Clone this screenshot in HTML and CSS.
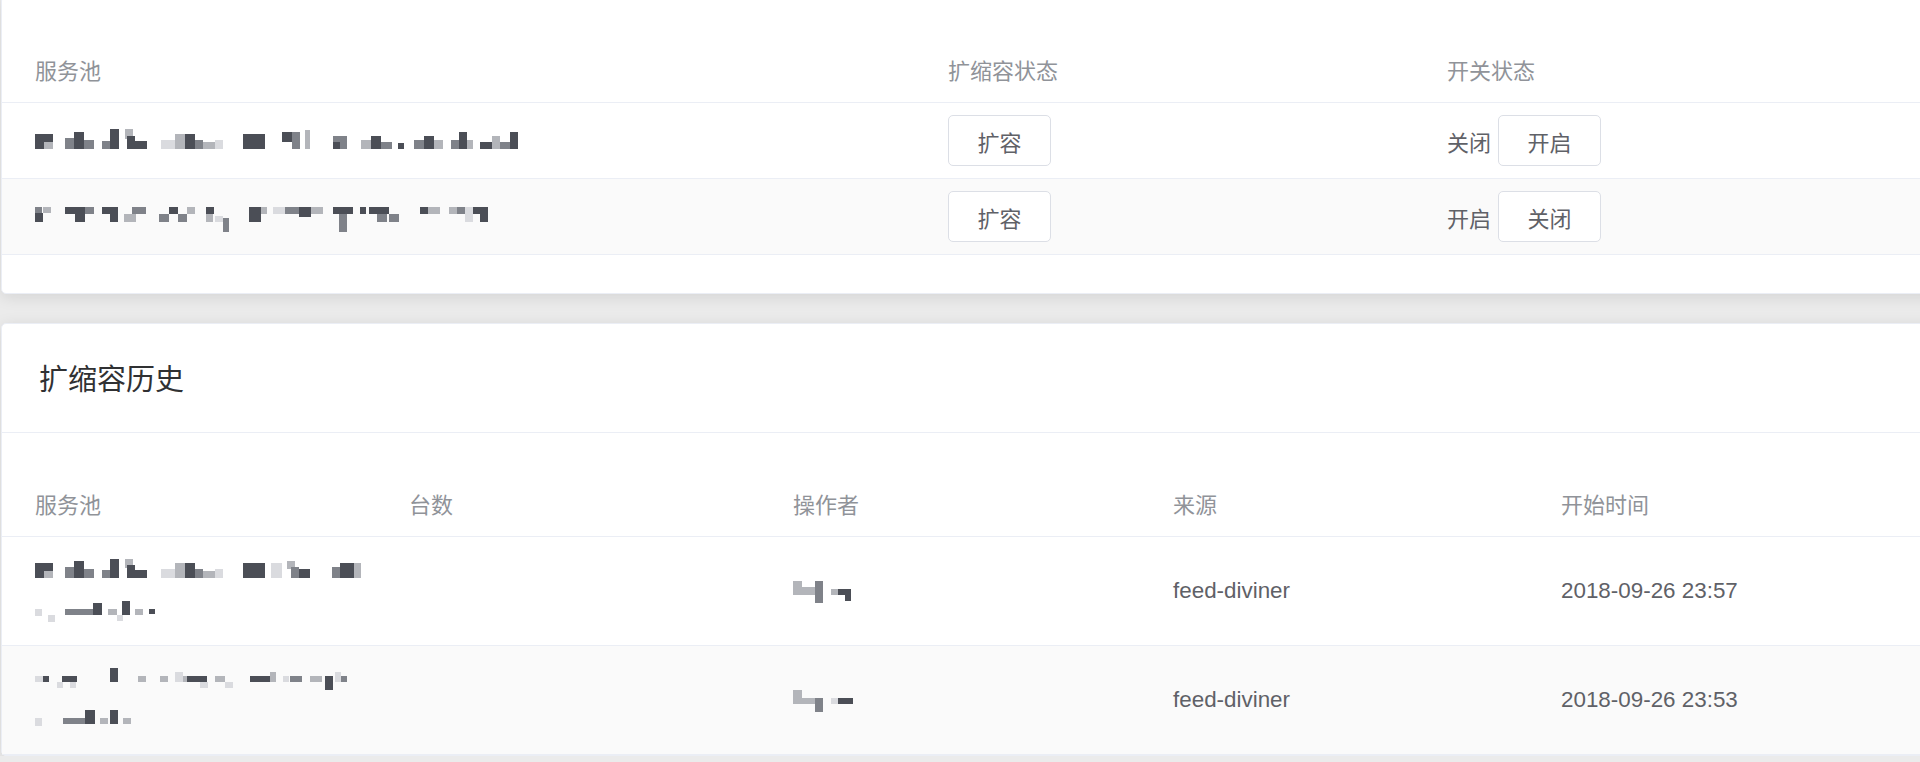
FILE: index.html
```html
<!DOCTYPE html>
<html lang="zh-CN">
<head>
<meta charset="utf-8">
<title>扩缩容</title>
<link rel="stylesheet" href="styles.css">
</head>
<body>
<div class="page">
  <section class="card card-top">
    <div class="table t3">
      <div class="row head">
        <div class="cell first">服务池</div>
        <div class="cell">扩缩容状态</div>
        <div class="cell">开关状态</div>
      </div>
      <div class="row">
        <div class="cell first">
          <svg class="mosaic" width="490" height="30" viewBox="0 0 490 30" aria-hidden="true">
            <rect class="d" x="0" y="8" width="18" height="15"/><rect class="l" x="9" y="16" width="9" height="7"/>
            <rect class="m" x="30" y="12" width="9" height="11"/><rect class="d" x="39" y="6" width="10" height="17"/><rect class="m" x="49" y="14" width="10" height="9"/>
            <rect class="m" x="67" y="15" width="8" height="8"/><rect class="d" x="75" y="3" width="9" height="20"/>
            <rect class="l" x="90" y="3" width="8" height="10"/><rect class="d" x="92" y="10" width="8" height="13"/><rect class="d" x="100" y="15" width="12" height="8"/>
            <rect class="x" x="126" y="14" width="14" height="9"/><rect class="l" x="140" y="8" width="10" height="15"/><rect class="d" x="150" y="8" width="10" height="15"/><rect class="m" x="160" y="14" width="8" height="9"/><rect class="l" x="168" y="16" width="12" height="7"/><rect class="x" x="180" y="14" width="8" height="9"/>
            <rect class="d" x="208" y="8" width="22" height="15"/>
            <rect class="d" x="247" y="6" width="10" height="10"/><rect class="m" x="257" y="6" width="8" height="17"/><rect class="l" x="270" y="4" width="5" height="19"/>
            <rect class="m" x="298" y="10" width="14" height="13"/><rect class="d" x="298" y="16" width="7" height="7"/>
            <rect class="l" x="326" y="14" width="10" height="9"/><rect class="d" x="336" y="10" width="10" height="13"/><rect class="m" x="346" y="16" width="11" height="7"/>
            <rect class="d" x="363" y="17" width="6" height="6"/>
            <rect class="m" x="379" y="14" width="10" height="9"/><rect class="d" x="389" y="10" width="10" height="13"/><rect class="l" x="399" y="14" width="9" height="9"/>
            <rect class="m" x="416" y="14" width="8" height="9"/><rect class="d" x="424" y="6" width="8" height="17"/><rect class="l" x="432" y="14" width="6" height="9"/>
            <rect class="d" x="445" y="16" width="12" height="7"/><rect class="l" x="457" y="10" width="8" height="13"/><rect class="m" x="465" y="16" width="10" height="7"/><rect class="d" x="475" y="6" width="8" height="17"/>
          </svg>
        </div>
        <div class="cell"><button class="btn" type="button">扩容</button></div>
        <div class="cell"><span class="state">关闭</span><button class="btn" type="button">开启</button></div>
      </div>
      <div class="row striped">
        <div class="cell first">
          <svg class="mosaic" width="460" height="30" viewBox="0 0 460 30" aria-hidden="true">
            <rect class="m" x="0" y="5" width="7" height="6"/><rect class="d" x="0" y="11" width="8" height="9"/><rect class="l" x="8" y="5" width="8" height="6"/>
            <rect class="d" x="30" y="5" width="10" height="7"/><rect class="d" x="40" y="5" width="10" height="15"/><rect class="m" x="50" y="5" width="9" height="7"/>
            <rect class="d" x="67" y="5" width="16" height="7"/><rect class="d" x="75" y="12" width="8" height="8"/>
            <rect class="l" x="89" y="12" width="12" height="8"/><rect class="m" x="97" y="5" width="14" height="7"/>
            <rect class="m" x="124" y="12" width="10" height="8"/><rect class="d" x="134" y="5" width="9" height="7"/><rect class="m" x="143" y="12" width="9" height="8"/><rect class="l" x="152" y="5" width="8" height="7"/>
            <rect class="d" x="171" y="5" width="8" height="7"/><rect class="l" x="171" y="12" width="7" height="8"/><rect class="x" x="180" y="14" width="8" height="6"/><rect class="m" x="188" y="16" width="6" height="14"/>
            <rect class="d" x="214" y="5" width="12" height="15"/><rect class="l" x="226" y="5" width="6" height="7"/>
            <rect class="x" x="238" y="5" width="12" height="7"/><rect class="m" x="250" y="5" width="14" height="7"/><rect class="d" x="264" y="5" width="12" height="10"/><rect class="l" x="276" y="5" width="12" height="7"/>
            <rect class="d" x="298" y="5" width="20" height="7"/><rect class="m" x="304" y="12" width="8" height="18"/>
            <rect class="d" x="325" y="5" width="6" height="7"/><rect class="d" x="334" y="5" width="20" height="7"/><rect class="m" x="342" y="12" width="10" height="8"/><rect class="m" x="354" y="12" width="10" height="8"/>
            <rect class="d" x="385" y="5" width="8" height="7"/><rect class="l" x="393" y="5" width="12" height="7"/>
            <rect class="l" x="414" y="5" width="8" height="7"/><rect class="m" x="422" y="5" width="8" height="7"/><rect class="x" x="430" y="5" width="8" height="15"/>
            <rect class="d" x="438" y="5" width="15" height="7"/><rect class="d" x="445" y="12" width="8" height="8"/>
          </svg>
        </div>
        <div class="cell"><button class="btn" type="button">扩容</button></div>
        <div class="cell"><span class="state">开启</span><button class="btn" type="button">关闭</button></div>
      </div>
    </div>
  </section>

  <section class="card card-history">
    <div class="card-header">扩缩容历史</div>
    <div class="card-body">
      <div class="table t5">
        <div class="row head">
          <div class="cell first">服务池</div>
          <div class="cell">台数</div>
          <div class="cell">操作者</div>
          <div class="cell">来源</div>
          <div class="cell">开始时间</div>
        </div>
        <div class="row tall">
          <div class="cell first multi">
            <div class="line">
              <svg class="mosaic" width="330" height="22" viewBox="0 0 330 22" aria-hidden="true">
                <rect class="d" x="0" y="4" width="18" height="15"/><rect class="l" x="9" y="12" width="9" height="7"/>
                <rect class="m" x="30" y="8" width="9" height="11"/><rect class="d" x="39" y="2" width="10" height="17"/><rect class="m" x="49" y="10" width="10" height="9"/>
                <rect class="m" x="67" y="11" width="8" height="8"/><rect class="d" x="75" y="0" width="9" height="19"/>
                <rect class="l" x="90" y="0" width="8" height="9"/><rect class="d" x="92" y="6" width="8" height="13"/><rect class="d" x="100" y="11" width="12" height="8"/>
                <rect class="x" x="126" y="10" width="14" height="9"/><rect class="l" x="140" y="4" width="10" height="15"/><rect class="d" x="150" y="4" width="10" height="15"/><rect class="m" x="160" y="10" width="8" height="9"/><rect class="l" x="168" y="12" width="12" height="7"/><rect class="x" x="180" y="10" width="8" height="9"/>
                <rect class="d" x="208" y="4" width="22" height="15"/>
                <rect class="x" x="236" y="4" width="11" height="15"/>
                <rect class="l" x="252" y="2" width="8" height="8"/><rect class="m" x="256" y="8" width="8" height="11"/><rect class="d" x="264" y="10" width="11" height="9"/>
                <rect class="m" x="297" y="8" width="8" height="11"/><rect class="d" x="305" y="4" width="14" height="15"/><rect class="l" x="319" y="4" width="7" height="15"/>
              </svg>
            </div>
            <div class="line">
              <svg class="mosaic" width="130" height="22" viewBox="0 0 130 22" aria-hidden="true">
                <rect class="x" x="0" y="8" width="7" height="7"/><rect class="x" x="13" y="14" width="7" height="7"/>
                <rect class="m" x="30" y="8" width="8" height="6"/><rect class="m" x="38" y="8" width="20" height="6"/><rect class="d" x="58" y="2" width="9" height="12"/>
                <rect class="l" x="73" y="8" width="9" height="6"/><rect class="x" x="82" y="14" width="6" height="6"/><rect class="d" x="87" y="0" width="8" height="14"/>
                <rect class="l" x="100" y="8" width="8" height="6"/><rect class="d" x="114" y="8" width="6" height="5"/>
              </svg>
            </div>
          </div>
          <div class="cell"></div>
          <div class="cell">
            <svg class="mosaic" width="60" height="24" viewBox="0 0 60 24" aria-hidden="true">
              <rect class="l" x="0" y="2" width="9" height="14"/><rect class="l" x="9" y="8" width="13" height="8"/><rect class="m" x="22" y="2" width="8" height="22"/>
              <rect class="l" x="38" y="10" width="7" height="6"/><rect class="d" x="45" y="10" width="13" height="6"/><rect class="d" x="52" y="16" width="6" height="6"/>
            </svg>
          </div>
          <div class="cell num">feed-diviner</div>
          <div class="cell num">2018-09-26 23:57</div>
        </div>
        <div class="row tall striped">
          <div class="cell first multi">
            <div class="line">
              <svg class="mosaic" width="340" height="22" viewBox="0 0 340 22" aria-hidden="true">
                <rect class="x" x="0" y="8" width="8" height="6"/><rect class="d" x="8" y="8" width="6" height="6"/>
                <rect class="x" x="22" y="14" width="6" height="6"/><rect class="d" x="27" y="8" width="15" height="6"/><rect class="x" x="35" y="14" width="6" height="6"/>
                <rect class="d" x="75" y="0" width="8" height="14"/>
                <rect class="l" x="103" y="8" width="8" height="6"/><rect class="l" x="125" y="8" width="8" height="6"/><rect class="x" x="140" y="4" width="8" height="10"/><rect class="l" x="148" y="8" width="8" height="6"/><rect class="d" x="152" y="8" width="20" height="6"/><rect class="x" x="165" y="14" width="8" height="6"/>
                <rect class="l" x="180" y="8" width="10" height="6"/><rect class="x" x="190" y="14" width="8" height="6"/>
                <rect class="d" x="215" y="8" width="20" height="6"/><rect class="l" x="235" y="4" width="6" height="10"/><rect class="x" x="248" y="8" width="6" height="6"/><rect class="m" x="255" y="8" width="12" height="6"/>
                <rect class="l" x="275" y="8" width="12" height="6"/><rect class="d" x="290" y="8" width="8" height="14"/><rect class="x" x="300" y="4" width="6" height="10"/><rect class="m" x="306" y="8" width="6" height="6"/>
              </svg>
            </div>
            <div class="line">
              <svg class="mosaic" width="120" height="22" viewBox="0 0 120 22" aria-hidden="true">
                <rect class="x" x="0" y="8" width="7" height="8"/>
                <rect class="m" x="28" y="8" width="22" height="6"/><rect class="d" x="50" y="0" width="10" height="14"/>
                <rect class="l" x="65" y="8" width="8" height="6"/><rect class="d" x="75" y="0" width="8" height="14"/><rect class="l" x="88" y="8" width="8" height="6"/>
              </svg>
            </div>
          </div>
          <div class="cell"></div>
          <div class="cell">
            <svg class="mosaic" width="62" height="24" viewBox="0 0 62 24" aria-hidden="true">
              <rect class="l" x="0" y="2" width="9" height="14"/><rect class="l" x="9" y="10" width="13" height="6"/><rect class="m" x="22" y="10" width="8" height="14"/>
              <rect class="x" x="38" y="10" width="7" height="6"/><rect class="d" x="45" y="10" width="15" height="6"/>
            </svg>
          </div>
          <div class="cell num">feed-diviner</div>
          <div class="cell num">2018-09-26 23:53</div>
        </div>
      </div>
    </div>
  </section>
</div>
</body>
</html>
```
FILE: styles.css
```css
* { box-sizing: border-box; }

html, body {
  margin: 0;
  background: #ebebeb;
  overflow: hidden;
}

body {
  font-family: "Liberation Sans", "Noto Sans CJK SC", sans-serif;
  font-size: 22px;
  color: #5f6167;
}

.page {
  width: 1990px;
  padding-left: 1px;
}

.card {
  width: 1980px;
  background: #fff;
  border: 1px solid #ebeef5;
  border-radius: 5px;
  box-shadow: 0 3px 16px rgba(0, 0, 0, 0.1);
}

.card-top {
  margin-top: -4px;
  padding: 41px 0 38px;
}

.card-history {
  margin-top: 29px;
}

.card-header {
  height: 109px;
  border-bottom: 1px solid #ebeef5;
  display: flex;
  align-items: center;
  padding: 0 0 2px 37px;
  font-size: 29px;
  color: #303133;
}

.card-body {
  padding-top: 39px;
}

.row {
  display: grid;
  border-bottom: 1px solid #ebeef5;
  height: 76px;
}

.t3 .row { grid-template-columns: 921px 499px 1fr; }
.t5 .row { grid-template-columns: 382px 384px 380px 388px 1fr; }

.row.head {
  height: 65px;
  color: #909399;
}

.row.head .cell { padding-bottom: 3px; }

.row.tall { height: 109px; }

.row.striped { background: #fafafa; }

.cell {
  display: flex;
  align-items: center;
  padding-left: 25px;
  white-space: nowrap;
}

.cell.first { padding-left: 33px; }

.cell.multi {
  flex-direction: column;
  align-items: flex-start;
  justify-content: center;
}

.line {
  height: 42px;
  display: flex;
  align-items: center;
}

.num { font-size: 22.4px; }

.state { margin-right: 7px; }

.btn {
  width: 103px;
  height: 51px;
  padding: 0;
  margin: 0;
  background: #fff;
  border: 1px solid #dcdfe6;
  border-radius: 5px;
  font-family: inherit;
  font-size: 22px;
  color: #5f6167;
}

.mosaic { display: block; }
.mosaic .d { fill: #4b4e56; }
.mosaic .m { fill: #7f8289; }
.mosaic .l { fill: #b3b5ba; }
.mosaic .x { fill: #dadbdf; }
```
